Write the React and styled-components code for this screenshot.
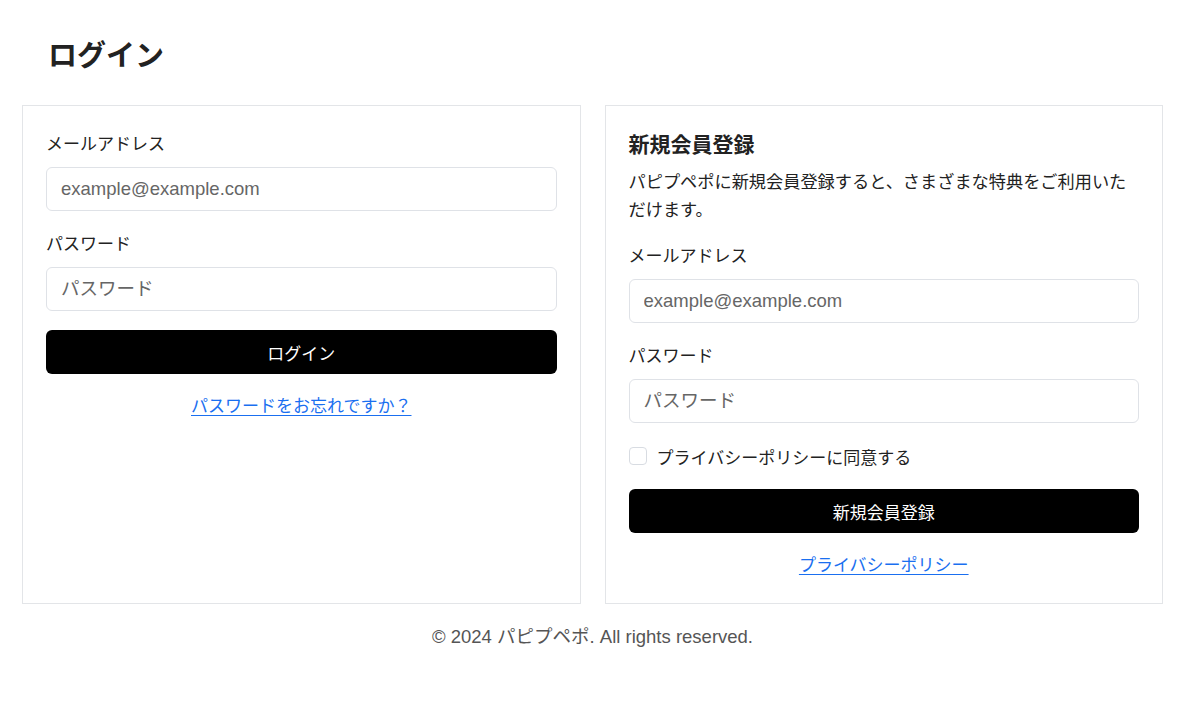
import React from 'react';
import styled, { createGlobalStyle } from 'styled-components';

const GlobalStyle = createGlobalStyle`
  html, body {
    margin: 0;
    padding: 0;
    background: #fff;
  }
  body {
    font-family: "Liberation Sans", "Noto Sans CJK JP", sans-serif;
    color: #222;
  }
  * {
    box-sizing: border-box;
  }
`;

const Page = styled.div`
  width: 1185px;
  padding: 0 22px;
`;

const Header = styled.header`
  padding: 39px 26px 0;
  height: 105px;
`;

const PageTitle = styled.h1`
  margin: 0;
  font-size: 29px;
  line-height: 34px;
  font-weight: 700;
  color: #222;
`;

const CardGrid = styled.div`
  display: grid;
  grid-template-columns: 1fr 1fr;
  gap: 24px;
`;

const Card = styled.section`
  border: 1px solid #e3e5e8;
  padding: 23px 23px;
  display: flex;
  flex-direction: column;
`;

const CardTitle = styled.h2`
  margin: 0;
  padding-top: 2px;
  font-size: 21px;
  line-height: 28px;
  font-weight: 700;
  color: #222;
`;

const Description = styled.p`
  margin: 9px 0 17px;
  font-size: 17.2px;
  line-height: 28px;
  color: #222;
`;

const Field = styled.div`
  display: flex;
  flex-direction: column;
  gap: 8px;
  margin-bottom: 18px;
`;

const Label = styled.label`
  padding-top: 2px;
  font-size: 17px;
  line-height: 28px;
  color: #222;
`;

const Input = styled.input`
  height: 44px;
  width: 100%;
  border: 1px solid #dfe2e7;
  border-radius: 6px;
  padding: 0 14px;
  font-family: inherit;
  font-size: 18.5px;
  color: #555;
  outline: none;

  &::placeholder {
    color: #666;
  }
`;

const CheckRow = styled.label`
  display: flex;
  align-items: center;
  gap: 10px;
  height: 28px;
  margin: 1px 0 19px;
  font-size: 17px;
  color: #222;
`;

const CheckBox = styled.span`
  width: 18px;
  height: 18px;
  border: 1px solid #d8dce2;
  border-radius: 4px;
  background: #fff;
`;

const PrimaryButton = styled.button`
  height: 44px;
  width: 100%;
  margin-top: ${(p) => p.$top || 0}px;
  border: none;
  border-radius: 6px;
  background: #000;
  color: #fff;
  font-family: inherit;
  font-size: 17px;
  cursor: pointer;
`;

const LinkRow = styled.div`
  text-align: center;
  margin-top: 19px;
  line-height: 28px;
`;

const TextLink = styled.a`
  color: #1a6ff0;
  font-size: 17px;
  text-decoration: underline;
  text-underline-offset: 3px;
  cursor: pointer;
`;

const Footer = styled.footer`
  text-align: center;
  margin-top: 19px;
  font-size: 18.5px;
  line-height: 28px;
  color: #555;
`;

const App = () => {
  return (
    <>
      <GlobalStyle />
      <Page>
        <Header>
          <PageTitle>ログイン</PageTitle>
        </Header>
        <CardGrid>
          <Card>
            <Field>
              <Label>メールアドレス</Label>
              <Input type="email" placeholder="example@example.com" />
            </Field>
            <Field>
              <Label>パスワード</Label>
              <Input type="password" placeholder="パスワード" />
            </Field>
            <PrimaryButton $top={1}>ログイン</PrimaryButton>
            <LinkRow>
              <TextLink>パスワードをお忘れですか？</TextLink>
            </LinkRow>
          </Card>
          <Card>
            <CardTitle>新規会員登録</CardTitle>
            <Description>
              パピプペポに新規会員登録すると、さまざまな特典をご利用いただけます。
            </Description>
            <Field>
              <Label>メールアドレス</Label>
              <Input type="email" placeholder="example@example.com" />
            </Field>
            <Field>
              <Label>パスワード</Label>
              <Input type="password" placeholder="パスワード" />
            </Field>
            <CheckRow>
              <CheckBox />
              プライバシーポリシーに同意する
            </CheckRow>
            <PrimaryButton>新規会員登録</PrimaryButton>
            <LinkRow>
              <TextLink>プライバシーポリシー</TextLink>
            </LinkRow>
          </Card>
        </CardGrid>
        <Footer>© 2024 パピプペポ. All rights reserved.</Footer>
      </Page>
    </>
  );
};

export default App;
